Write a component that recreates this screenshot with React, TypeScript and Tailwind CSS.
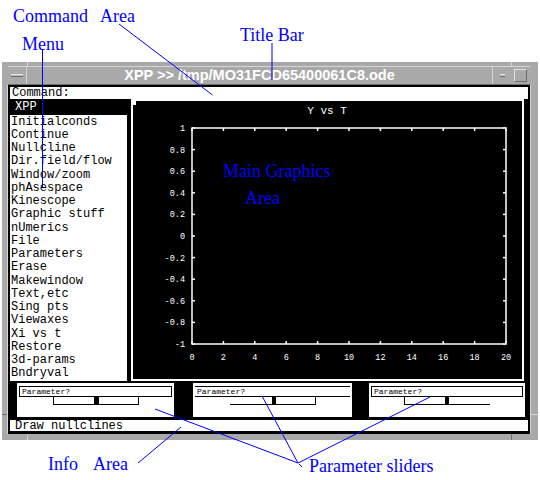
import React from "react";

const menuItems = [
  "Initialconds",
  "Continue",
  "Nullcline",
  "Dir.field/flow",
  "Window/zoom",
  "phAsespace",
  "Kinescope",
  "Graphic stuff",
  "nUmerics",
  "File",
  "Parameters",
  "Erase",
  "Makewindow",
  "Text,etc",
  "Sing pts",
  "Viewaxes",
  "Xi vs t",
  "Restore",
  "3d-params",
  "Bndryval",
];

const yTicks = [1, 0.8, 0.6, 0.4, 0.2, 0, -0.2, -0.4, -0.6, -0.8, -1];
const xTicks = [0, 2, 4, 6, 8, 10, 12, 14, 16, 18, 20];

// Y vs T plot drawn inside the black graphics window
function Plot() {
  const x0 = 59;
  const x1 = 373;
  const y0 = 27;
  const y1 = 243;
  const sx = (v: number) => x0 + ((x1 - x0) * v) / 20;
  const sy = (v: number) => y0 + ((y1 - y0) * (1 - v)) / 2;

  return (
    <svg width={389} height={278} className="block font-['Liberation_Mono',monospace]">
      <rect x={0} y={0} width={3} height={4} fill="#fff" />
      <text x={194} y={13} textAnchor="middle" fill="#fff" fontSize={11}>
        Y vs T
      </text>
      <rect x={x0} y={y0} width={x1 - x0} height={y1 - y0} fill="none" stroke="#fff" strokeWidth={1.5} />
      {xTicks.map((t) => (
        <g key={t}>
          <line x1={sx(t)} y1={y0} x2={sx(t)} y2={y0 + 3} stroke="#fff" strokeWidth={1.5} />
          <line x1={sx(t)} y1={y1} x2={sx(t)} y2={y1 - 3} stroke="#fff" strokeWidth={1.5} />
          <text x={sx(t)} y={259} textAnchor="middle" fill="#fff" fontSize={8.5}>
            {t}
          </text>
        </g>
      ))}
      {yTicks.map((t) => (
        <g key={t}>
          <line x1={x0} y1={sy(t)} x2={x0 + 3} y2={sy(t)} stroke="#fff" strokeWidth={1.5} />
          <line x1={x1} y1={sy(t)} x2={x1 - 3} y2={sy(t)} stroke="#fff" strokeWidth={1.5} />
          <text x={52} y={sy(t) + 3} textAnchor="end" fill="#fff" fontSize={8.5}>
            {t}
          </text>
        </g>
      ))}
    </svg>
  );
}

interface PanelProps {
  width: string;
  ml: string;
  labelBorder: string;
  leftHalf: string;
  rightHalf: string;
}

function ParamPanel({ width, ml, labelBorder, leftHalf, rightHalf }: PanelProps) {
  return (
    <div className={`${width} ${ml} h-[34px] bg-white flex flex-col items-stretch px-[2px] pt-[3px]`}>
      <div className={`h-[11px] ${labelBorder} border-black flex items-center pl-[2px] text-[8px] leading-none text-black`}>
        Parameter?
      </div>
      <div className="flex justify-center">
        <div className={`w-[42px] h-[8px] ${leftHalf} border-black`} />
        <div className="w-[3px] h-[8px] bg-black" />
        <div className={`w-[41px] h-[8px] ${rightHalf} border-black`} />
      </div>
    </div>
  );
}

export default function App() {
  return (
    <div className="relative w-[540px] h-[480px] bg-white overflow-hidden font-['Liberation_Mono',monospace]">
      <div className="pt-[62px] pl-[2px]">
        {/* window frame */}
        <div className="relative w-[536px] h-[378px] bg-[#a9a9a9] pl-[6px] pr-[8px] pt-[4px] pb-[6px] flex flex-col">
          {/* resize handle marks */}
          <span className="absolute left-[25px] top-0 w-px h-[4px] bg-[#d6d6d6]" />
          <span className="absolute left-[509px] top-0 w-px h-[4px] bg-[#d6d6d6]" />
          <span className="absolute left-[25px] bottom-0 w-px h-[6px] bg-[#d6d6d6]" />
          <span className="absolute left-[509px] bottom-0 w-px h-[6px] bg-[#707070]" />
          <span className="absolute left-0 top-[352px] w-[6px] h-px bg-[#707070]" />
          <span className="absolute right-0 top-[352px] w-[8px] h-px bg-[#d6d6d6]" />
          <span className="absolute left-[5px] top-[23px] w-px h-[349px] bg-[#d6d6d6]" />
          <span className="absolute left-[528px] top-[23px] w-px h-[349px] bg-[#d6d6d6]" />

          {/* title bar */}
          <div className="h-[19px] flex items-stretch border-t border-[#d6d6d6] border-b border-b-[#707070]">
            <div className="w-[19px] flex items-center justify-center border-r border-[#d6d6d6]">
              <div className="w-[12px] h-[3px] border-t border-[#e4e4e4] border-b border-b-[#6a6a6a] bg-[#bcbcbc]" />
            </div>
            <div className="flex-1 flex items-center justify-center text-white font-['Liberation_Sans',Arial,sans-serif] font-bold text-[14.5px] leading-none">
              XPP &gt;&gt; /tmp/MO31FCD65400061C8.ode
            </div>
            <div className="w-[19px] flex items-center justify-center border-l border-[#d6d6d6]">
              <div className="w-[5px] h-[3px] border-t border-[#e4e4e4] border-b border-b-[#6a6a6a] bg-[#bcbcbc]" />
            </div>
            <div className="w-[19px] flex items-center justify-center">
              <div className="w-[13px] h-[13px] border border-t-[#e0e0e0] border-l-[#e0e0e0] border-b-[#6a6a6a] border-r-[#6a6a6a]" />
            </div>
          </div>

          {/* main black body */}
          <div className="flex-1 bg-black px-[2px] pt-[2px] pb-[3px] flex flex-col">
            <div className="h-[12px] bg-white flex items-center pl-[2px] text-[12px] leading-none text-black">
              Command:
            </div>

            <div className="h-[282px] flex">
              {/* menu */}
              <div className="w-[117px] flex flex-col">
                <div className="h-[16px] flex items-center pl-[5px] text-white text-[12px] leading-none">XPP</div>
                <div className="flex-1 bg-white flex flex-col">
                  {menuItems.map((item) => (
                    <div key={item} className="h-[13.25px] flex items-center pl-[1px] text-[12px] leading-none text-black whitespace-pre">
                      {item}
                    </div>
                  ))}
                </div>
              </div>

              {/* graphics window */}
              <div className="ml-[4px] w-[393px] h-[282px] border-2 border-white bg-black">
                <Plot />
              </div>
            </div>

            {/* parameter sliders */}
            <div className="mt-[2px] flex">
              <ParamPanel width="w-[157px]" ml="ml-[7px]" labelBorder="border" leftHalf="border border-t-0" rightHalf="border border-t-0" />
              <ParamPanel width="w-[159px]" ml="ml-[19px]" labelBorder="border-y" leftHalf="border-b" rightHalf="border border-t-0" />
              <ParamPanel width="w-[156px]" ml="ml-[17px]" labelBorder="border" leftHalf="border border-t-0" rightHalf="border-b" />
            </div>

            {/* info area */}
            <div className="mt-[3px] h-[11px] bg-white flex items-center pl-[5px] text-[12px] leading-none text-black">
              Draw nullclines
            </div>
          </div>
        </div>
      </div>

      {/* annotations */}
      <svg className="absolute inset-0 pointer-events-none" width={540} height={480}>
        <g stroke="#0000ff" strokeWidth={1} fill="none">
          <line x1={119} y1={24} x2={212.5} y2={95} />
          <line x1={42.5} y1={50} x2={42.5} y2={187} />
          <line x1={272} y1={43} x2={272} y2={80} />
          <line x1={138} y1={463} x2={181} y2={427} />
          <line x1={155} y1={409} x2={298} y2={463} />
          <line x1={262} y1={396} x2={298} y2={463} />
          <line x1={430} y1={397} x2={298} y2={463} />
          <line x1={299} y1={464} x2={302} y2={467} />
        </g>
      </svg>
      <div className="absolute left-[13px] top-[7px] text-[18px] leading-[18px] text-[#0000ff] font-['Liberation_Serif',serif] whitespace-pre">
        Command<span className="ml-[12px]">Area</span>
      </div>
      <div className="absolute left-[22px] top-[35px] text-[18px] leading-[18px] text-[#0000ff] font-['Liberation_Serif',serif]">
        Menu
      </div>
      <div className="absolute left-[240px] top-[26px] text-[18px] leading-[18px] text-[#0000ff] font-['Liberation_Serif',serif] whitespace-pre">
        Title Bar
      </div>
      <div className="absolute left-[223px] top-[162px] text-[18px] leading-[18px] text-[#0000ff] font-['Liberation_Serif',serif] whitespace-pre">
        Main Graphics
      </div>
      <div className="absolute left-[245px] top-[189px] text-[18px] leading-[18px] text-[#0000ff] font-['Liberation_Serif',serif]">
        Area
      </div>
      <div className="absolute left-[48px] top-[455px] text-[18px] leading-[18px] text-[#0000ff] font-['Liberation_Serif',serif] whitespace-pre">
        Info<span className="ml-[15px]">Area</span>
      </div>
      <div className="absolute left-[309px] top-[457px] text-[18px] leading-[18px] text-[#0000ff] font-['Liberation_Serif',serif] whitespace-pre">
        Parameter sliders
      </div>
    </div>
  );
}
